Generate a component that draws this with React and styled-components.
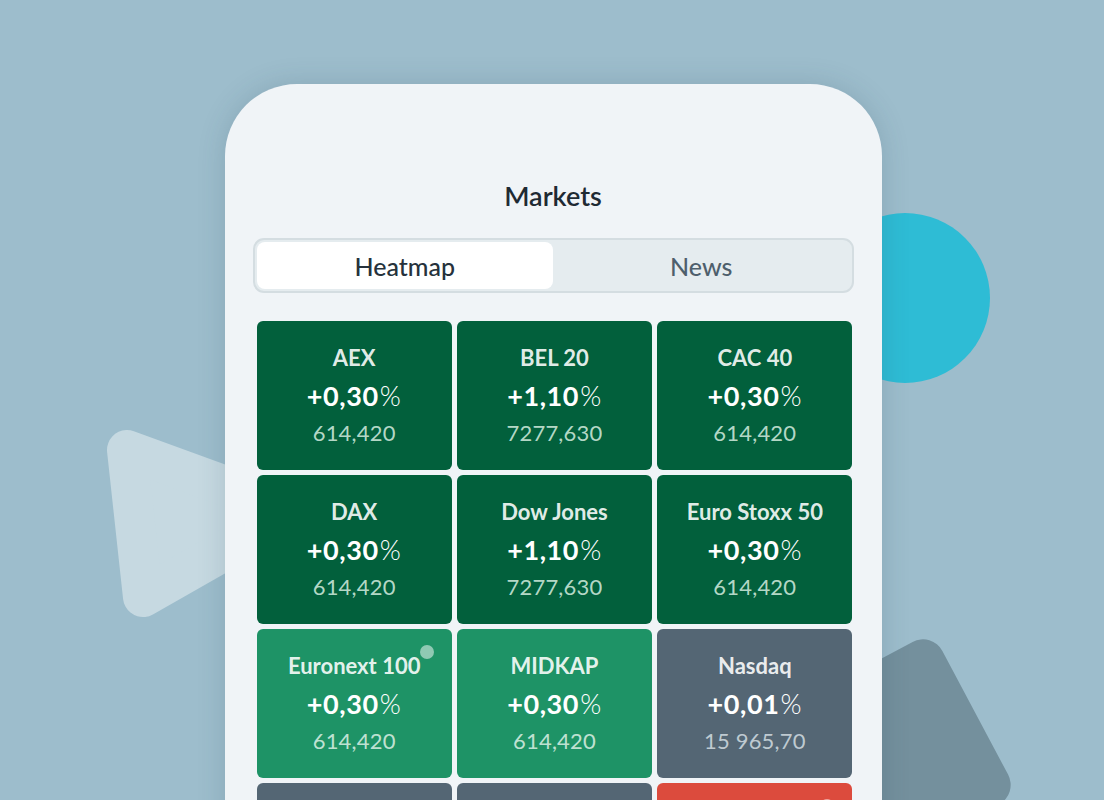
import React from "react";
import styled, { createGlobalStyle } from "styled-components";

const GlobalStyle = createGlobalStyle`
  html, body {
    margin: 0;
    padding: 0;
    background: #9dbdcc;
    font-family: Lato, "Noto Sans", sans-serif;
  }
`;

// the fourth row runs off the bottom of the screen, so its tiles stay empty
const markets = [
  { name: "AEX", change: "+0,30", value: "614,420", tone: "up" },
  { name: "BEL 20", change: "+1,10", value: "7277,630", tone: "up" },
  { name: "CAC 40", change: "+0,30", value: "614,420", tone: "up" },
  { name: "DAX", change: "+0,30", value: "614,420", tone: "up" },
  { name: "Dow Jones", change: "+1,10", value: "7277,630", tone: "up" },
  { name: "Euro Stoxx 50", change: "+0,30", value: "614,420", tone: "up" },
  { name: "Euronext 100", change: "+0,30", value: "614,420", tone: "mild", dot: true },
  { name: "MIDKAP", change: "+0,30", value: "614,420", tone: "mild" },
  { name: "Nasdaq", change: "+0,01", value: "15 965,70", tone: "flat" },
  { id: "r4a", tone: "flat" },
  { id: "r4b", tone: "flat" },
  { id: "r4c", tone: "down", dot: true },
];

const tones = {
  up: { bg: "#02603c", sub: "rgba(214, 238, 224, 0.86)" },
  mild: { bg: "#1e9366", sub: "rgba(226, 244, 234, 0.84)" },
  flat: { bg: "#546674", sub: "rgba(222, 230, 236, 0.78)" },
  down: { bg: "#dc4b3d", sub: "rgba(255, 235, 232, 0.84)" },
};

export default function App() {
  return (
    <>
      <GlobalStyle />
      <Scene>
        <Triangle viewBox="0 0 260 250" width="260" height="250">
          <polygon
            points="47,50 63,197 214,111"
            fill="#c6d9e1"
            stroke="#c6d9e1"
            strokeWidth="40"
            strokeLinejoin="round"
          />
        </Triangle>
        <Circle />
        <Tilted />
        <Phone>
          <Title>Markets</Title>
          <Tabs>
            <Tab $active>Heatmap</Tab>
            <Tab>News</Tab>
          </Tabs>
          <Grid>
            {markets.map((m) => (
              <Tile key={m.name || m.id} $tone={m.tone}>
                {m.dot && <Dot />}
                {m.name && (
                  <>
                    <Name>{m.name}</Name>
                    <Change>
                      {m.change}
                      <Percent>%</Percent>
                    </Change>
                    <Value $tone={m.tone}>{m.value}</Value>
                  </>
                )}
              </Tile>
            ))}
          </Grid>
        </Phone>
      </Scene>
    </>
  );
}

const Scene = styled.div`
  position: relative;
  width: 1104px;
  height: 800px;
  overflow: hidden;
  background: #9dbdcc;
  display: flex;
  justify-content: center;
`;

const Triangle = styled.svg`
  position: absolute;
  left: 80px;
  top: 400px;
`;

const Circle = styled.div`
  position: absolute;
  left: 820px;
  top: 213px;
  width: 170px;
  height: 170px;
  border-radius: 50%;
  background: #2ebcd5;
`;

const Tilted = styled.div`
  position: absolute;
  left: 802px;
  top: 664px;
  width: 184px;
  height: 184px;
  border-radius: 22px;
  background: #74909d;
  transform: rotate(-28deg);
`;

const Phone = styled.div`
  position: relative;
  z-index: 1;
  box-sizing: border-box;
  width: 657px;
  height: 760px;
  margin-top: 84px;
  margin-left: 2px;
  padding: 96px 28px 0;
  background: #f0f4f7;
  border-radius: 72px 72px 0 0;
  box-shadow: 0 0 28px rgba(40, 70, 90, 0.18);
`;

const Title = styled.h1`
  margin: 0;
  height: 32px;
  line-height: 32px;
  text-align: center;
  font-size: 27px;
  font-weight: 600;
  color: #1f2a33;
`;

const Tabs = styled.div`
  display: grid;
  grid-template-columns: 1fr 1fr;
  box-sizing: border-box;
  height: 55px;
  margin-top: 26px;
  padding: 2px;
  border: 2px solid #d4dde1;
  border-radius: 11px;
  background: #e5ecef;
`;

const Tab = styled.div`
  display: flex;
  align-items: center;
  justify-content: center;
  border-radius: 8px;
  font-size: 25px;
  font-weight: 500;
  color: ${(p) => (p.$active ? "#26323c" : "#4e5f6c")};
  background: ${(p) => (p.$active ? "#ffffff" : "transparent")};
`;

const Grid = styled.div`
  display: grid;
  grid-template-columns: repeat(3, 1fr);
  grid-auto-rows: 149px;
  gap: 5px;
  margin: 28px 1px 0 4px;
`;

const Tile = styled.div`
  position: relative;
  display: flex;
  flex-direction: column;
  align-items: center;
  justify-content: center;
  border-radius: 6px;
  background: ${(p) => tones[p.$tone].bg};
  color: #ffffff;
`;

const Dot = styled.span`
  position: absolute;
  top: 16px;
  right: 18px;
  width: 14px;
  height: 14px;
  border-radius: 50%;
  background: rgba(255, 255, 255, 0.5);
`;

const Name = styled.div`
  line-height: 38px;
  font-size: 22px;
  font-weight: 700;
  color: rgba(255, 255, 255, 0.9);
`;

const Change = styled.div`
  line-height: 37px;
  font-size: 27px;
  font-weight: 700;
  letter-spacing: 0.6px;
`;

const Percent = styled.span`
  font-weight: 300;
  margin-left: 1px;
`;

const Value = styled.div`
  line-height: 38px;
  font-size: 22px;
  font-weight: 400;
  letter-spacing: 0.2px;
  color: ${(p) => tones[p.$tone].sub};
`;
